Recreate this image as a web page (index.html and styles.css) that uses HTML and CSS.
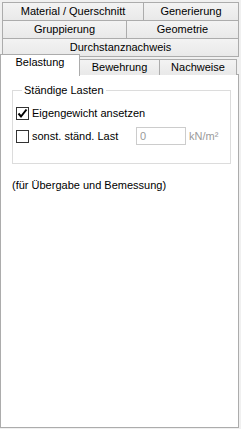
FILE: index.html
```html
<!DOCTYPE html>
<html>
<head>
<meta name="viewport" content="width=device-width, initial-scale=1.0">
<link rel="stylesheet" href="styles.css">
</head>
<body>

<div class="tabs">
  <div class="tab-row">
    <div class="tab w-material">Material / Querschnitt</div>
    <div class="tab w-generierung">Generierung</div>
  </div>
  <div class="tab-row">
    <div class="tab w-gruppierung">Gruppierung</div>
    <div class="tab w-geometrie">Geometrie</div>
  </div>
  <div class="tab-row">
    <div class="tab w-durchstanz">Durchstanznachweis</div>
  </div>
  <div class="tab-row active-row">
    <div class="tab selected w-belastung">Belastung</div>
    <div class="tab w-bewehrung">Bewehrung</div>
    <div class="tab w-nachweise">Nachweise</div>
  </div>
</div>

<div class="panel">
  <fieldset class="group">
    <legend>Ständige Lasten</legend>
    <div class="check-line">
      <span class="checkbox">
        <svg width="11" height="11" viewBox="0 0 11 11"><path d="M1.5 5.5 L4 8.5 L9.5 1.5" fill="none" stroke="#000" stroke-width="2"/></svg>
      </span>
      <span>Eigengewicht ansetzen</span>
    </div>
    <div class="check-line second">
      <span class="checkbox"></span>
      <span class="check-label">sonst. ständ. Last</span>
      <input class="value" type="text" value="0" disabled>
      <span class="unit">kN/m²</span>
    </div>
  </fieldset>
  <p class="note">(für Übergabe und Bemessung)</p>
</div>

</body>
</html>
```

FILE: styles.css
```css
* {
  box-sizing: border-box;
}

body {
  margin: 0;
  background-color: #f0f0f0;
  font: 11px "Liberation Sans", Arial, sans-serif;
  color: #000;
}

/* tab strip, four lines of tabs like a multiline tab control */
.tabs {
  padding: 2px 0 0 2px;
}

.tab-row {
  display: flex;
  height: 19px;
  margin-bottom: -1px;
}

.tab {
  border: 1px solid #acacac;
  background: linear-gradient(#f3f3f3, #e9e9e9);
  text-align: center;
  line-height: 17px;
  margin-right: -1px;
  white-space: nowrap;
}

.w-material { width: 142px; }
.w-generierung { width: 96px; }
.w-gruppierung { width: 125px; }
.w-geometrie { width: 113px; }
.w-durchstanz { width: 237px; }

.active-row {
  height: 21px;
  margin: -3px 0 -1px -2px;
  align-items: flex-end;
}

.active-row .tab {
  height: 16px;
  border-bottom: none;
  line-height: 15px;
}

.active-row .tab.selected {
  height: 22px;
  background: #fff;
  position: relative;
  z-index: 1;
  margin-bottom: -1px;
  line-height: 14px;
  padding-bottom: 6px;
}

.w-belastung { width: 80px; }
.w-bewehrung { width: 81px; }
.w-nachweise { width: 78px; }

.panel {
  width: 239px;
  height: 354px;
  border: 1px solid #acacac;
  background-color: #fff;
  padding: 0 0 0 11px;
}

.group {
  width: 219px;
  height: 80px;
  margin: 9px 0 0 0;
  padding: 6px 0 0 3px;
  border: 1px solid #dcdcdc;
}

.group legend {
  padding: 0 2px;
  margin-left: 6px;
}

.check-line {
  display: flex;
  align-items: center;
  height: 14px;
  margin-top: 4px;
  gap: 3px;
}

.check-line.second {
  margin-top: 9px;
}

.checkbox {
  width: 13px;
  height: 13px;
  border: 1px solid #333;
  background-color: #fff;
  display: flex;
  align-items: center;
  justify-content: center;
}

.check-label {
  width: 101px;
}

.value {
  width: 50px;
  height: 18px;
  border: 1px solid #cccccc;
  background-color: #fff;
  font: 11px "Liberation Sans", Arial, sans-serif;
  color: #9a9a9a;
  padding: 0 3px;
}

.unit {
  color: #9a9a9a;
  margin-left: 0;
}

.note {
  margin: 15px 0 0 0;
}
```
